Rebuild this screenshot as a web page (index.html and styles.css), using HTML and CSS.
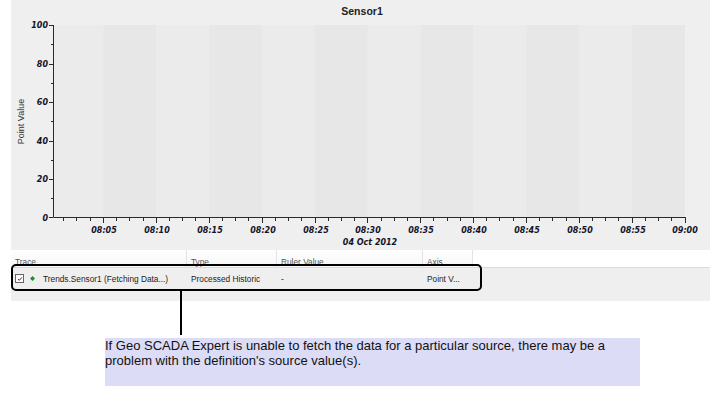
FILE: index.html
```html
<!DOCTYPE html>
<html lang="en">
<head>
  <meta charset="UTF-8">
  <meta name="viewport" content="width=device-width, initial-scale=1.0">
  <title>Trend - Sensor1</title>
  <link rel="stylesheet" href="styles.css">
</head>
<body>

  <div class="trend">
    <svg class="chart" width="699" height="250" viewBox="11 0 699 250">
      <!-- time bands, one per 5 minutes -->
      <g class="bands">
        <rect x="53" y="25" width="50.3" height="193" fill="#ebebeb"/>
        <rect x="103.3" y="25" width="52.9" height="193" fill="#e7e7e7"/>
        <rect x="156.2" y="25" width="52.9" height="193" fill="#ebebeb"/>
        <rect x="209.1" y="25" width="52.9" height="193" fill="#e7e7e7"/>
        <rect x="262" y="25" width="52.8" height="193" fill="#ebebeb"/>
        <rect x="314.8" y="25" width="52.9" height="193" fill="#e7e7e7"/>
        <rect x="367.7" y="25" width="52.9" height="193" fill="#ebebeb"/>
        <rect x="420.6" y="25" width="52.9" height="193" fill="#e7e7e7"/>
        <rect x="473.5" y="25" width="52.9" height="193" fill="#ebebeb"/>
        <rect x="526.4" y="25" width="52.9" height="193" fill="#e7e7e7"/>
        <rect x="579.3" y="25" width="52.8" height="193" fill="#ebebeb"/>
        <rect x="632.1" y="25" width="52.9" height="193" fill="#e7e7e7"/>
      </g>

      <text class="title" x="362" y="15" text-anchor="middle">Sensor1</text>
      <text class="axis-title" transform="translate(24 121.5) rotate(-90)" text-anchor="middle">Point Value</text>

      <!-- axes -->
      <path class="axis" d="M53.5 25 V217.5 H686"/>
      <path class="axis" d="M49 25.5 H53 M49 64.5 H53 M49 102.5 H53 M49 141.5 H53 M49 179.5 H53 M49 217.5 H53"/>
      <path class="axis" d="M51 44.5 H53 M51 83.5 H53 M51 121.5 H53 M51 160.5 H53 M51 198.5 H53"/>
      <path class="axis" d="M63.5 218 V221 M76.5 218 V221 M90.5 218 V221 M116.5 218 V221 M129.5 218 V221 M143.5 218 V221 M169.5 218 V221 M182.5 218 V221 M195.5 218 V221 M222.5 218 V221 M235.5 218 V221 M248.5 218 V221 M275.5 218 V221 M288.5 218 V221 M301.5 218 V221 M328.5 218 V221 M341.5 218 V221 M354.5 218 V221 M381.5 218 V221 M394.5 218 V221 M407.5 218 V221 M433.5 218 V221 M447.5 218 V221 M460.5 218 V221 M486.5 218 V221 M499.5 218 V221 M513.5 218 V221 M539.5 218 V221 M552.5 218 V221 M566.5 218 V221 M592.5 218 V221 M605.5 218 V221 M618.5 218 V221 M645.5 218 V221 M658.5 218 V221 M671.5 218 V221"/>
      <path class="axis" d="M103.5 218 V223 M156.5 218 V223 M209.5 218 V223 M262.5 218 V223 M315.5 218 V223 M367.5 218 V223 M420.5 218 V223 M473.5 218 V223 M526.5 218 V223 M579.5 218 V223 M632.5 218 V223 M685.5 218 V223"/>

      <g class="tick-label" text-anchor="end">
        <text x="48" y="28">100</text>
        <text x="48" y="67">80</text>
        <text x="48" y="105">60</text>
        <text x="48" y="144">40</text>
        <text x="48" y="182">20</text>
        <text x="48" y="221">0</text>
      </g>
      <g class="tick-label" text-anchor="middle">
        <text x="104" y="233">08:05</text>
        <text x="157" y="233">08:10</text>
        <text x="210" y="233">08:15</text>
        <text x="263" y="233">08:20</text>
        <text x="316" y="233">08:25</text>
        <text x="368" y="233">08:30</text>
        <text x="370" y="245">04 Oct 2012</text>
        <text x="421" y="233">08:35</text>
        <text x="474" y="233">08:40</text>
        <text x="527" y="233">08:45</text>
        <text x="580" y="233">08:50</text>
        <text x="633" y="233">08:55</text>
        <text x="685" y="233">09:00</text>
      </g>
    </svg>

    <div class="grid">
      <div class="grid-head">
        <span class="col col-trace">Trace</span>
        <span class="col col-type">Type</span>
        <span class="col col-ruler">Ruler Value</span>
        <span class="col col-axis">Axis</span>
        <span class="col-fill"></span>
      </div>
      <div class="grid-row">
        <span class="col col-trace">
          <span class="check">
            <svg width="8" height="8" viewBox="0 0 8 8"><path d="M1.5 4 L3 5.8 L6.5 1.8" fill="none" stroke="#222" stroke-width="1.2"/></svg>
          </span>
          <svg class="marker" width="5" height="5" viewBox="0 0 5 5"><path d="M2.5 0 L5 2.5 L2.5 5 L0 2.5 Z" fill="#2c8a2c"/></svg>
          Trends.Sensor1 (Fetching Data...)
        </span>
        <span class="col col-type">Processed Historic</span>
        <span class="col col-ruler">-</span>
        <span class="col col-axis">Point V...</span>
      </div>
    </div>

    <div class="highlight"></div>
    <div class="connector"></div>
  </div>

  <p class="note">If Geo SCADA Expert is unable to fetch the data for a particular source, there may be a problem with the definition's source value(s).</p>

</body>
</html>
```

FILE: styles.css
```css
body {
  margin: 0;
  background-color: #fff;
  font-family: "Liberation Sans", Arial, sans-serif;
}
.trend {
  position: relative;
  margin-left: 11px;
  padding-bottom: 12px;
  background-color: #efefef;
}
.chart {
  display: block;
}
.title {
  font-family: "Liberation Sans", Arial, sans-serif;
  font-size: 10.5px;
  font-weight: bold;
  fill: #222;
}
.axis-title {
  font-family: "Liberation Sans", Arial, sans-serif;
  font-size: 9px;
  fill: #333;
}
.axis {
  fill: none;
  stroke: #2a2a2a;
  stroke-width: 1;
}
.tick-label {
  font-family: "DejaVu Sans", Verdana, sans-serif;
  font-size: 8px;
  font-weight: bold;
  font-style: italic;
  fill: #14142a;
}
.grid {
  font-size: 8.3px;
  color: #222;
}
.grid-head {
  display: flex;
  height: 17px;
  background: linear-gradient(#fff, #f6f6f6);
  border-bottom: 1px solid #dadada;
  color: #555;
  overflow: hidden;
}
.grid-head .col {
  padding-top: 6px;
  border-right: 1px solid #e3e3e3;
}
.col-fill {
  flex: 1;
  background-color: #fff;
}
.col {
  display: flex;
  align-items: center;
  box-sizing: border-box;
  padding-left: 4px;
  white-space: nowrap;
}
.col-trace { width: 176px; }
.col-type { width: 90px; }
.col-ruler { width: 146px; }
.col-axis { width: 50px; }
.grid-row {
  display: flex;
  height: 21px;
  align-items: center;
}
.check {
  display: inline-flex;
  width: 9px;
  height: 9px;
  border: 1px solid #666;
  background-color: #fff;
  box-sizing: border-box;
  align-items: center;
  justify-content: center;
  margin-right: 6px;
}
.check svg {
  width: 6px;
  height: 6px;
}
.marker {
  margin-right: 8px;
}
.highlight {
  position: absolute;
  left: 0;
  top: 264px;
  width: 471px;
  height: 27px;
  box-sizing: border-box;
  border: 2px solid #000;
  border-radius: 5px;
}
.connector {
  position: absolute;
  left: 169px;
  top: 290px;
  width: 2px;
  height: 45px;
  background-color: #000;
}
.note {
  width: 535px;
  height: 48px;
  margin: 37px 0 0 105px;
  background-color: #dcdcf7;
  font-size: 13px;
  line-height: 15px;
  color: #111;
}
```
